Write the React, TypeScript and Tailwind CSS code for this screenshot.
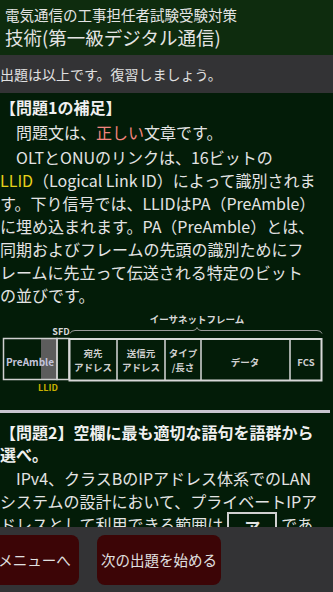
import React from "react";

const INDENT = "\u3000";

const Frame = () => (
  <svg width="333" height="94" viewBox="0 0 333 94" className="block">
    <text x="197" y="16" fontSize="9.5" fill="#d8d8d8" textAnchor="middle" fontWeight="bold">
      イーサネットフレーム
    </text>
    <text x="61" y="28" fontSize="9" fill="#d8d8d8" textAnchor="middle" fontWeight="bold">
      SFD
    </text>
    <path
      d="M70 26.5 Q71 23.5 75 23.5 L193 23.5 Q196 23.5 197 20.5 Q198 23.5 201 23.5 L317 23.5 Q321 23.5 322 26.5"
      fill="none"
      stroke="#9a9a9a"
      strokeWidth="1"
    />
    {/* preamble + sfd */}
    <rect x="41" y="31.5" width="16" height="41" fill="#5c5c5c" />
    <rect x="3.5" y="31.5" width="53.5" height="41" fill="none" stroke="#d0d0d0" strokeWidth="1.5" />
    <rect x="57" y="31.5" width="12" height="41" fill="none" stroke="#d0d0d0" strokeWidth="1.5" />
    <text x="30" y="59" fontSize="10" fill="#c4c4dc" textAnchor="middle" fontWeight="bold">
      PreAmble
    </text>
    {/* ethernet frame */}
    <rect x="69.5" y="32" width="252" height="41.5" fill="none" stroke="#d8d8d8" strokeWidth="2" />
    <line x1="117" y1="32" x2="117" y2="73.5" stroke="#d8d8d8" strokeWidth="1.5" />
    <line x1="165" y1="32" x2="165" y2="73.5" stroke="#d8d8d8" strokeWidth="1.5" />
    <line x1="201" y1="32" x2="201" y2="73.5" stroke="#d8d8d8" strokeWidth="1.5" />
    <line x1="290" y1="32" x2="290" y2="73.5" stroke="#d8d8d8" strokeWidth="1.5" />
    <g fontSize="9.5" fill="#d0d0d0" textAnchor="middle" fontWeight="bold">
      <text x="93" y="50">宛先</text>
      <text x="93" y="63.5">アドレス</text>
      <text x="141" y="50">送信元</text>
      <text x="141" y="63.5">アドレス</text>
      <text x="183" y="50">タイプ</text>
      <text x="183" y="63.5">/長さ</text>
      <text x="245" y="59">データ</text>
      <text x="306" y="59">FCS</text>
    </g>
    <text x="48" y="84" fontSize="9" fill="#c8b000" textAnchor="middle" fontWeight="bold">
      LLID
    </text>
  </svg>
);

export default function App() {
  return (
    <div className="w-[333px] h-[592px] overflow-hidden flex flex-col bg-[#333335] font-['Noto_Sans_CJK_JP',sans-serif]">
      {/* header */}
      <div className="h-[55px] shrink-0 bg-[#0e2c0e] px-[5px] pt-[5px] text-[#e4e4e4]">
        <div className="text-[14.5px] leading-[20px]">電気通信の工事担任者試験受験対策</div>
        <div className="text-[18.5px] leading-[24px]">技術(第一級デジタル通信)</div>
      </div>

      <div className="h-[38px] shrink-0 flex items-center text-[14px] text-[#e0e0e0] bg-[#333335]">
        出題は以上です。復習しましょう。
      </div>

      {/* content */}
      <div className="flex-1 overflow-hidden bg-[#031c08] text-[#e4e4e4] text-[16px] whitespace-nowrap pt-[2.5px]">
        <div className="font-bold leading-[23px] text-[#f0f0f0]">【問題1の補足】</div>
        <p className="mt-[2px] leading-[23px]">
          {INDENT}問題文は、<span className="text-[#f2857e]">正しい</span>文章です。
        </p>
        <p className="mt-[2px] leading-[23px]">
          {INDENT}OLTとONUのリンクは、16ビットの
          <br />
          <span className="text-[#e8d21a]">LLID</span>（Logical Link ID）によって識別されま
          <br />
          す。下り信号では、LLIDはPA（PreAmble）
          <br />
          に埋め込まれます。PA（PreAmble）とは、
          <br />
          同期およびフレームの先頭の識別ためにフ
          <br />
          レームに先立って伝送される特定のビット
          <br />
          の並びです。
        </p>

        <Frame />

        <div className="mt-[9.5px] h-[3px] w-[330px] bg-[#c9c5d0]" />

        <div className="mt-[8px] font-bold leading-[22px] text-[#f0f0f0]">
          【問題2】空欄に最も適切な語句を語群から
          <br />
          選べ。
        </div>
        <p className="mt-[1.5px] leading-[23px]">
          {INDENT}IPv4、クラスBのIPアドレス体系でのLAN
          <br />
          システムの設計において、プライベートIPア
          <br />
          ドレスとして利用できる範囲は
          <span className="inline-block align-top mt-[-1px] mx-[4px] w-[50px] h-[30px] border-2 border-[#d0d0d0] text-center font-bold leading-[26px]">
            ア
          </span>
          であ
          <br />
          る。
        </p>
      </div>

      {/* footer */}
      <div className="h-[65px] shrink-0 flex items-start gap-[18px] pt-[8px] bg-[#333335]">
        <button className="ml-[-10px] w-[89px] h-[50px] rounded-[8px] bg-[#3c0506] text-[14.5px] text-[#e0e0e0] whitespace-nowrap">
          メニューへ
        </button>
        <button className="w-[124px] h-[50px] rounded-[8px] bg-[#3c0506] text-[14.5px] text-[#e0e0e0] whitespace-nowrap">
          次の出題を始める
        </button>
      </div>
    </div>
  );
}
